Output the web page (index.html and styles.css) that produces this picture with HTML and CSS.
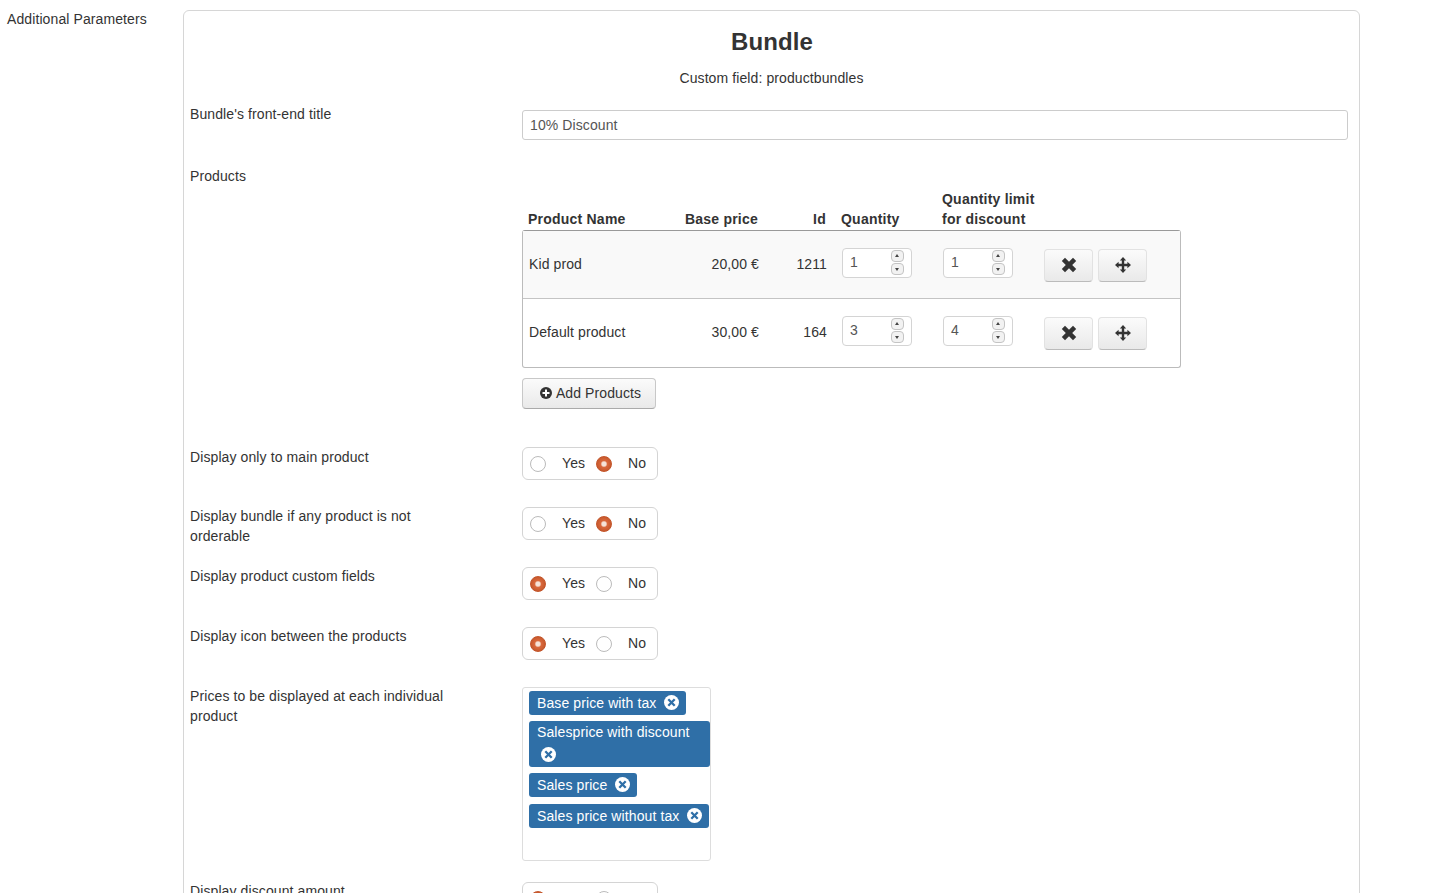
FILE: index.html
```html
<!DOCTYPE html>
<html lang="en">
<head>
<meta charset="utf-8">
<title>Bundle</title>
<link rel="stylesheet" href="styles.css">
</head>
<body>
<svg class="defs" width="0" height="0">
  <symbol id="i-x" viewBox="0 0 16 16"><path d="M4 .8 8 4.8 12 .8 15.2 4 11.2 8 15.2 12 12 15.2 8 11.2 4 15.2 .8 12 4.8 8 .8 4Z" fill="#333"/></symbol>
  <symbol id="i-move" viewBox="0 0 16 16"><path d="M8 0 11.2 3.6H9.2V6.8H12.4V4.8L16 8 12.4 11.2V9.2H9.2V12.4H11.2L8 16 4.8 12.4H6.8V9.2H3.6V11.2L0 8 3.6 4.8V6.8H6.8V3.6H4.8Z" fill="#333"/></symbol>
  <symbol id="i-plus" viewBox="0 0 12 12"><circle cx="6" cy="6" r="6" fill="#333"/><path d="M5 2.5h2V5h2.5v2H7v2.5H5V7H2.5V5H5Z" fill="#fff"/></symbol>
  <symbol id="i-close" viewBox="0 0 15 15"><circle cx="7.5" cy="7.5" r="7.5" fill="#fff"/><path d="M4.3 4.3 10.7 10.7M10.7 4.3 4.3 10.7" stroke="#2f6fa7" stroke-width="2.3"/></symbol>
</svg>
<div class="page">
  <div class="side-label">Additional Parameters</div>
  <main class="panel">
    <h1 class="title">Bundle</h1>
    <p class="subtitle">Custom field: productbundles</p>

    <div class="row row-title">
      <div class="label">Bundle's front-end title</div>
      <div class="control pad-title"><input class="text-input" type="text" value="10% Discount"></div>
    </div>

    <div class="row row-products">
      <div class="label">Products</div>
      <div class="control pad-products">
        <div class="thead">
          <div>Product Name</div>
          <div class="num">Base price</div>
          <div class="num">Id</div>
          <div class="th-qty">Quantity</div>
          <div>Quantity limit<br>for discount</div>
        </div>
        <div class="tbody">
          <div class="tr tr-odd">
            <div class="td">Kid prod</div>
            <div class="td num">20,00 €</div>
            <div class="td num">1211</div>
            <div class="td-qty"><div class="spin"><span class="spin-val">1</span><span class="spin-btns"><i class="up"></i><i class="down"></i></span></div></div>
            <div><div class="spin"><span class="spin-val">1</span><span class="spin-btns"><i class="up"></i><i class="down"></i></span></div></div>
            <div class="actions">
              <button class="btn btn-act"><svg class="ic16"><use href="#i-x"/></svg></button>
              <button class="btn btn-act"><svg class="ic16"><use href="#i-move"/></svg></button>
            </div>
          </div>
          <div class="tr">
            <div class="td">Default product</div>
            <div class="td num">30,00 €</div>
            <div class="td num">164</div>
            <div class="td-qty"><div class="spin"><span class="spin-val">3</span><span class="spin-btns"><i class="up"></i><i class="down"></i></span></div></div>
            <div><div class="spin"><span class="spin-val">4</span><span class="spin-btns"><i class="up"></i><i class="down"></i></span></div></div>
            <div class="actions">
              <button class="btn btn-act"><svg class="ic16"><use href="#i-x"/></svg></button>
              <button class="btn btn-act"><svg class="ic16"><use href="#i-move"/></svg></button>
            </div>
          </div>
        </div>
        <button class="btn btn-add"><svg class="ic12"><use href="#i-plus"/></svg>Add Products</button>
      </div>
    </div>

    <div class="row row-opt row-first">
      <div class="label">Display only to main product</div>
      <div class="control"><div class="radios"><span class="radio"></span><span class="yes">Yes</span><span class="radio on"></span><span class="no">No</span></div></div>
    </div>
    <div class="row row-opt">
      <div class="label">Display bundle if any product is not orderable</div>
      <div class="control"><div class="radios"><span class="radio"></span><span class="yes">Yes</span><span class="radio on"></span><span class="no">No</span></div></div>
    </div>
    <div class="row row-opt">
      <div class="label">Display product custom fields</div>
      <div class="control"><div class="radios"><span class="radio on"></span><span class="yes">Yes</span><span class="radio"></span><span class="no">No</span></div></div>
    </div>
    <div class="row row-opt">
      <div class="label">Display icon between the products</div>
      <div class="control"><div class="radios"><span class="radio on"></span><span class="yes">Yes</span><span class="radio"></span><span class="no">No</span></div></div>
    </div>

    <div class="row row-tags">
      <div class="label">Prices to be displayed at each individual product</div>
      <div class="control">
        <div class="tagbox">
          <span class="tag">Base price with tax <svg class="ic15"><use href="#i-close"/></svg></span>
          <span class="tag tag-wrap">Salesprice with discount <svg class="ic15"><use href="#i-close"/></svg></span>
          <span class="tag tag-spaced">Sales price <svg class="ic15"><use href="#i-close"/></svg></span>
          <span class="tag tag-wide">Sales price without tax <svg class="ic15"><use href="#i-close"/></svg></span>
        </div>
      </div>
    </div>

    <div class="row row-opt">
      <div class="label">Display discount amount</div>
      <div class="control"><div class="radios"><span class="radio on"></span><span class="yes">Yes</span><span class="radio"></span><span class="no">No</span></div></div>
    </div>
  </main>
</div>
</body>
</html>
```

FILE: styles.css
```css
* { box-sizing: border-box; }
html, body { margin: 0; height: 893px; overflow: hidden; background: #fff; }
body { font: 14px/20px "Liberation Sans", Arial, sans-serif; letter-spacing: .1px; color: #333; }
.defs { position: absolute; }

.page { display: flex; padding-top: 10px; }
.side-label { width: 183px; padding-left: 7px; line-height: 18px; }
.panel { width: 1177px; padding: 18px 11px 60px 6px; border: 1px solid #d6d6d6; border-radius: 6px; }

.title { margin: 0; padding-left: 6px; font-size: 24px; line-height: 26px; font-weight: 700; letter-spacing: .1px; text-align: center; }
.subtitle { margin: 13px 0 0; padding-left: 5px; text-align: center; }

.row { display: grid; grid-template-columns: 332px 1fr; }
.label { padding-right: 60px; }
.row-title { margin-top: 16px; }
.pad-title { padding-top: 6px; }
.row-products { margin-top: 26px; margin-bottom: 37px; }
.pad-products { padding-top: 23px; }
.row-opt { min-height: 60px; }
.row-first .label { padding-top: 1px; }
.row-tags { padding-bottom: 20px; }

.text-input { display: block; width: 826px; height: 30px; padding: 0 7px; border: 1px solid #ccc; border-radius: 3px; font: inherit; letter-spacing: inherit; color: #555; }

.thead { display: grid; grid-template-columns: 130px 100px 68px 116px 102px; padding-left: 6px; align-items: end; font-weight: 700; letter-spacing: .22px; }
.num { text-align: right; }
.th-qty { padding-left: 15px; }

.tbody { width: 659px; margin-top: 1px; border: 1px solid #bbb; border-top-color: #999; border-radius: 3px; }
.tr { display: grid; grid-template-columns: 130px 100px 68px 116px 101px auto; align-items: center; height: 67px; padding-left: 6px; }
.tr + .tr { height: 69px; border-top: 1px solid #c4c4c4; }
.tr-odd { background: #f9f9f9; }
.tr-odd .actions { margin-top: 1px; }
.td { margin-bottom: 2px; }
.td-qty { padding-left: 15px; }

.spin { display: flex; justify-content: space-between; width: 70px; height: 30px; margin-bottom: 4px; padding: 1px 7px 0 7px; background: #fff; border: 1px solid #d4d4d4; border-radius: 4px; color: #555; }
.spin-val { line-height: 24px; }
.spin-btns { display: flex; flex-direction: column; gap: 1px; }
.spin-btns i { position: relative; display: block; width: 13px; height: 12px; background: #f2f2f2; border: 1px solid #c4c4c4; border-radius: 4px; }
.spin-btns i::after { content: ""; position: absolute; left: 3px; border: 2px solid transparent; }
.spin-btns .up::after { top: 1px; border-bottom: 3px solid #444; }
.spin-btns .down::after { top: 4px; border-top: 3px solid #444; }

.btn { display: inline-flex; align-items: center; justify-content: center; padding: 0; border: 1px solid #e2e2e2; border-bottom-color: #bbb; border-radius: 4px; background: linear-gradient(#fbfbfb, #e9e9e9); font: inherit; letter-spacing: inherit; color: #333; }
.actions { display: flex; gap: 5px; }
.btn-act { width: 49px; height: 33px; }
.ic16 { width: 16px; height: 16px; }
.btn-add { gap: 4px; width: 134px; height: 31px; margin-top: 10px; padding: 0 0 2px 3px; border-color: #c8c8c8; border-bottom-color: #aaa; }
.ic12 { width: 12px; height: 12px; margin-top: 1px; }

.radios { display: flex; align-items: center; width: 136px; height: 33px; margin-top: 1px; padding-left: 7px; border: 1px solid #d4d4d4; border-radius: 6px; }
.radio { flex: none; width: 16px; height: 16px; border: 1px solid #bbb; border-radius: 50%; background: #fff; }
.radio.on { border-color: #c3552a; background: radial-gradient(circle, #f6e3d8 0 2px, #d9683c 3.5px, #c3552a 8px); }
.yes { width: 50px; padding-left: 16px; margin-top: -1px; }
.no { padding-left: 16px; margin-top: -1px; }

.tagbox { display: flex; flex-direction: column; align-items: flex-start; width: 189px; height: 174px; margin-top: 1px; padding: 3px 0 0 6px; border: 1px solid #ddd; border-radius: 3px; }
.tag { max-width: 181px; margin-bottom: 6px; padding: 1px 7px 0 8px; background: #2f6fa7; border-radius: 3px; color: #fff; line-height: 23px; }
.tag-wrap { padding-top: 0; }
.tag-spaced { margin-bottom: 7px; }
.tag-wide { max-width: none; }
.ic15 { width: 15px; height: 15px; margin-left: 4px; vertical-align: -2px; }
```
